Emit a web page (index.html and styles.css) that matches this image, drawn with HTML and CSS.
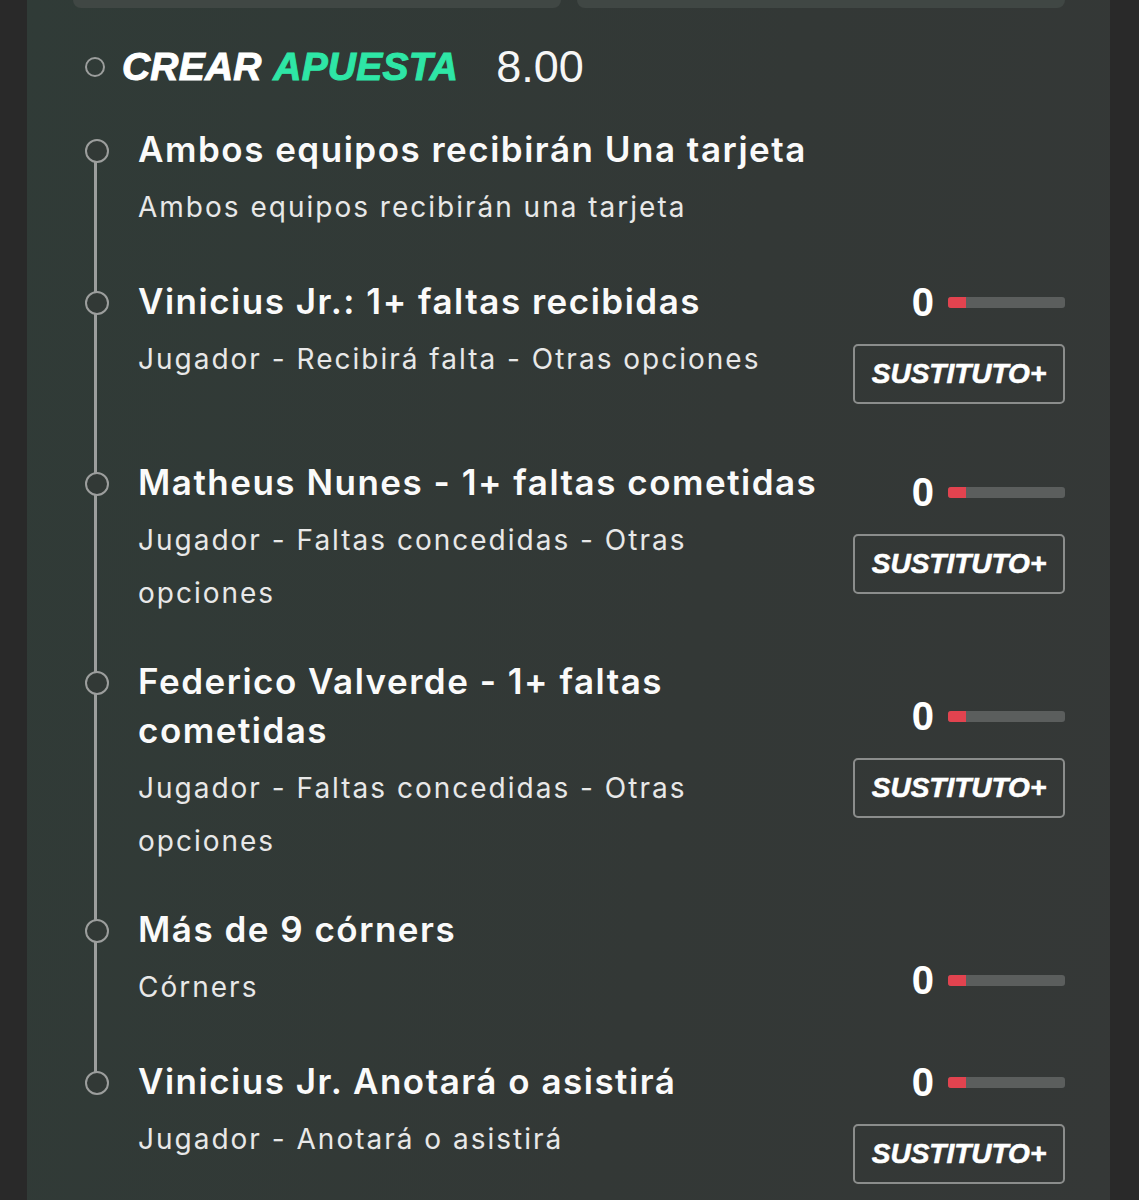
FILE: index.html
```html
<!DOCTYPE html>
<html lang="es">

<head>
    <meta charset="UTF-8">
    <meta name="viewport" content="width=device-width, initial-scale=1.0">
    <title>Crear Apuesta</title>
    <link rel="stylesheet" href="styles.css">
</head>

<body>
    <div class="panel">
        <div class="cards">
            <div class="card"></div>
            <div class="card"></div>
        </div>

        <div class="heading">
            <span class="dot"></span>
            <h2><span class="w">CREAR</span> <span class="g">APUESTA</span></h2>
            <span class="odds">8.00</span>
        </div>

        <ul class="picks">
            <li class="item item--loose">
                <div class="text">
                    <h3>Ambos equipos recibirán Una tarjeta</h3>
                    <p>Ambos equipos recibirán una tarjeta</p>
                </div>
            </li>
            <li class="item">
                <div class="text">
                    <h3>Vinicius Jr.: 1+ faltas recibidas</h3>
                    <p>Jugador - Recibirá falta - Otras opciones</p>
                </div>
                <div class="side side--top">
                    <div class="score"><span class="num">0</span><span class="bar"><span class="fill"></span></span></div>
                    <button>SUSTITUTO+</button>
                </div>
            </li>
            <li class="item">
                <div class="text">
                    <h3>Matheus Nunes - 1+ faltas cometidas</h3>
                    <p>Jugador - Faltas concedidas - Otras<br>opciones</p>
                </div>
                <div class="side side--mid">
                    <div class="score"><span class="num">0</span><span class="bar"><span class="fill"></span></span></div>
                    <button>SUSTITUTO+</button>
                </div>
            </li>
            <li class="item">
                <div class="text">
                    <h3>Federico Valverde - 1+ faltas<br>cometidas</h3>
                    <p>Jugador - Faltas concedidas - Otras<br>opciones</p>
                </div>
                <div class="side side--low">
                    <div class="score"><span class="num">0</span><span class="bar"><span class="fill"></span></span></div>
                    <button>SUSTITUTO+</button>
                </div>
            </li>
            <li class="item item--loose">
                <div class="text">
                    <h3>Más de 9 córners</h3>
                    <p>Córners</p>
                </div>
                <div class="side side--lower">
                    <div class="score"><span class="num">0</span><span class="bar"><span class="fill"></span></span></div>
                </div>
            </li>
            <li class="item">
                <div class="text">
                    <h3>Vinicius Jr. Anotará o asistirá</h3>
                    <p>Jugador - Anotará o asistirá</p>
                </div>
                <div class="side side--top">
                    <div class="score"><span class="num">0</span><span class="bar"><span class="fill"></span></span></div>
                    <button>SUSTITUTO+</button>
                </div>
            </li>
        </ul>
    </div>
</body>

</html>
```

FILE: styles.css
```css
* {
    box-sizing: border-box;
    margin: 0;
    padding: 0;
}

body {
    background: #292929;
    font-family: "Inter", "Noto Sans", sans-serif;
    color: #fff;
}

.panel {
    margin: 0 29px 0 27px;
    min-height: 1200px;
    padding: 0 45px 0 46px;
    background: linear-gradient(100deg, #303b37 0%, #333836 60%, #353837 100%);
}

.cards {
    display: flex;
    gap: 16px;
}

.card {
    flex: 1;
    height: 8px;
    background: #404744;
    border-radius: 0 0 8px 8px;
}

.heading {
    display: flex;
    align-items: center;
    height: 50px;
    margin-top: 34px;
    padding-left: 12px;
}

.dot {
    width: 20px;
    height: 20px;
    border: 2.5px solid #9c9e9d;
    border-radius: 50%;
}

.heading h2 {
    margin-left: 17px;
    font-family: "Liberation Sans", Arial, sans-serif;
    font-weight: 700;
    font-style: italic;
    font-size: 39px;
    letter-spacing: 0.2px;
    word-spacing: 2px;
}

.heading .w {
    color: #fff;
    -webkit-text-stroke: 1px #fff;
}

.heading .g {
    color: #2ee6a6;
    -webkit-text-stroke: 1px #2ee6a6;
}

.odds {
    margin-left: 38px;
    font-family: "Liberation Sans", Arial, sans-serif;
    font-size: 45px;
    color: #f6f6f6;
}

.picks {
    list-style: none;
    margin-top: 33px;
}

.item {
    position: relative;
    display: flex;
    align-items: flex-start;
    padding: 0 0 37px 65px;
}

.item--loose {
    padding-bottom: 43px;
}

/* timeline dot + line */
.item::before {
    content: '';
    position: absolute;
    left: 12px;
    top: 14px;
    width: 20px;
    height: 20px;
    border: 2.5px solid #9c9e9d;
    border-radius: 50%;
    background: #323936;
    z-index: 1;
}

.item::after {
    content: '';
    position: absolute;
    left: 20.5px;
    top: 24px;
    bottom: -24px;
    width: 3px;
    background: #9c9e9d;
}

.item:last-child::after {
    display: none;
}

.text {
    flex: 1;
}

.text h3 {
    font-size: 35px;
    font-weight: 600;
    line-height: 49px;
    letter-spacing: 1.5px;
    white-space: nowrap;
    color: #fafafa;
    margin-bottom: 7px;
}

.text p {
    font-size: 28px;
    line-height: 53px;
    letter-spacing: 2px;
    white-space: nowrap;
    color: #e8e8e8;
}

.side {
    width: 212px;
    display: flex;
    flex-direction: column;
    align-items: flex-end;
}

.side--top {
    margin-top: 7px;
    margin-bottom: 17px;
}

.side--mid {
    margin-top: 16px;
}

.side--low {
    margin-top: 41px;
}

.side--lower {
    margin-top: 57px;
}

.score {
    display: flex;
    align-items: center;
    height: 36px;
    gap: 14px;
}

.num {
    font-family: "Liberation Sans", Arial, sans-serif;
    font-weight: 700;
    font-size: 40px;
    color: #fff;
}

.bar {
    display: block;
    width: 117px;
    height: 11px;
    background: #5b5e5d;
    border-radius: 3px;
    overflow: hidden;
}

.fill {
    display: block;
    width: 18px;
    height: 100%;
    background: #e2434f;
}

button {
    margin-top: 24px;
    width: 212px;
    height: 60px;
    border: 2.5px solid #8b8d8c;
    border-radius: 5px;
    background: transparent;
    color: #fff;
    font-family: "Liberation Sans", Arial, sans-serif;
    font-weight: 700;
    font-style: italic;
    font-size: 28px;
    -webkit-text-stroke: 0.6px #fff;
    cursor: pointer;
}
```
